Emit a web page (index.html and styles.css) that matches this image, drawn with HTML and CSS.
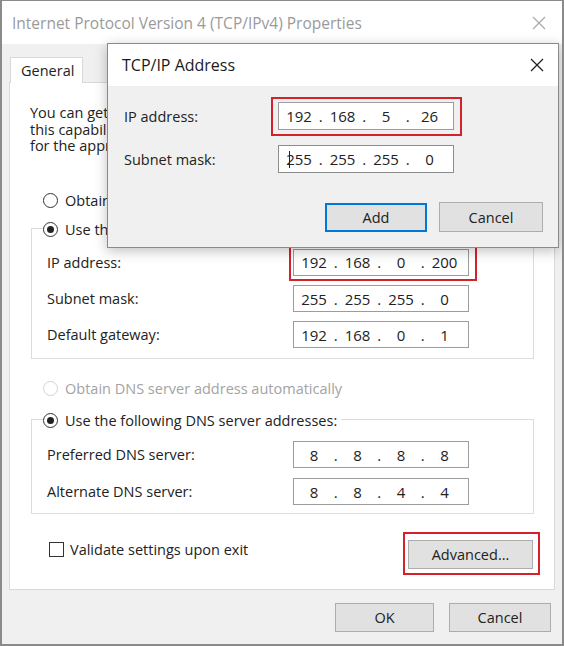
FILE: index.html
```html
<!DOCTYPE html>
<html lang="en">
<head>
  <meta charset="UTF-8">
  <title>Internet Protocol Version 4 (TCP/IPv4) Properties</title>
  <link rel="stylesheet" href="styles.css">
</head>
<body>
  <div class="window">
    <div class="titlebar">
      <span class="title">Internet Protocol Version 4 (TCP/IPv4) Properties</span>
      <svg class="close" width="14" height="14" viewBox="0 0 14 14"><path d="M1 1L13 13M13 1L1 13" stroke="currentColor" stroke-width="1.2" fill="none"/></svg>
    </div>
    <div class="win-body">
      <div class="tabs"><div class="tab">General</div></div>
      <div class="panel">
        <p class="intro">You can get IP settings assigned automatically if your network supports<br>this capability. Otherwise, you need to ask your network administrator<br>for the appropriate IP settings.</p>

        <div class="option first"><span class="radio"></span>Obtain an IP address automatically</div>

        <div class="group ip-group">
          <div class="group-title"><span class="radio on"></span>Use the following IP address:</div>
          <div class="row">
            <span>IP address:</span>
            <span class="mark">
              <span class="ip"><span>192</span><i>.</i><span>168</span><i>.</i><span>0</span><i>.</i><span>200</span></span>
            </span>
          </div>
          <div class="row">
            <span>Subnet mask:</span>
            <span class="ip"><span>255</span><i>.</i><span>255</span><i>.</i><span>255</span><i>.</i><span>0</span></span>
          </div>
          <div class="row">
            <span>Default gateway:</span>
            <span class="ip"><span>192</span><i>.</i><span>168</span><i>.</i><span>0</span><i>.</i><span>1</span></span>
          </div>
        </div>

        <div class="option dns disabled"><span class="radio"></span>Obtain DNS server address automatically</div>

        <div class="group dns-group">
          <div class="group-title"><span class="radio on"></span>Use the following DNS server addresses:</div>
          <div class="row">
            <span>Preferred DNS server:</span>
            <span class="ip"><span>8</span><i>.</i><span>8</span><i>.</i><span>8</span><i>.</i><span>8</span></span>
          </div>
          <div class="row">
            <span>Alternate DNS server:</span>
            <span class="ip"><span>8</span><i>.</i><span>8</span><i>.</i><span>4</span><i>.</i><span>4</span></span>
          </div>
        </div>

        <div class="panel-foot">
          <div class="check"><span class="box"></span>Validate settings upon exit</div>
          <span class="mark adv-mark"><button class="btn adv">Advanced...</button></span>
        </div>
      </div>
      <div class="buttons">
        <button class="btn ok">OK</button>
        <button class="btn cancel">Cancel</button>
      </div>
    </div>

    <!-- child dialog on top of the properties window -->
    <div class="dialog">
      <div class="titlebar active">
        <span class="title">TCP/IP Address</span>
        <svg class="close" width="14" height="14" viewBox="0 0 14 14"><path d="M1 1L13 13M13 1L1 13" stroke="currentColor" stroke-width="1.3" fill="none"/></svg>
      </div>
      <div class="dlg-body">
        <div class="dlg-row">
          <span>IP address:</span>
          <span class="mark dlg-mark">
            <span class="ip"><span>192</span><i>.</i><span>168</span><i>.</i><span>5</span><i>.</i><span>26</span></span>
          </span>
        </div>
        <div class="dlg-row">
          <span>Subnet mask:</span>
          <span class="ip sub"><b class="caret"></b><span>255</span><i>.</i><span>255</span><i>.</i><span>255</span><i>.</i><span>0</span></span>
        </div>
        <div class="dlg-buttons">
          <button class="btn add">Add</button>
          <button class="btn dcancel">Cancel</button>
        </div>
      </div>
    </div>
  </div>
</body>
</html>
```

FILE: styles.css
```css
* { box-sizing: border-box; }
body { margin: 0; font-family: "Open Sans", "Noto Sans", sans-serif; font-size: 14.5px; color: #222; background: #f0f0f0; }
.window { position: relative; width: 564px; height: 646px; border: 2px solid #8a8a8a; border-top-width: 1px; background: #f0f0f0; overflow: hidden; }

.titlebar { height: 43px; background: #fff; display: flex; align-items: center; justify-content: space-between; padding: 0 16px 0 10px; }
.titlebar .title { font-size: 15.5px; color: #9a9a9a; }
.titlebar .close { color: #a8a8a8; }
.titlebar.active .title { color: #1a1a1a; }
.titlebar.active .close { color: #222; }

.win-body { padding: 13px 7px 0 7px; }
.tabs { height: 25px; display: flex; padding-left: 1px; }
.tab { width: 73px; height: 26px; background: #fff; border: 1px solid #d9d9d9; border-bottom: none; padding: 3px 0 0 10px; position: relative; z-index: 1; }
.panel { height: 508px; background: #fff; border: 1px solid #d9d9d9; padding: 0 0 0 20px; overflow: hidden; }

.intro { margin: 22px 0 0; line-height: 16.5px; white-space: nowrap; }

.option { display: flex; align-items: center; height: 18px; margin-left: 13px; }
.option.first { margin-top: 37px; }
.option.dns { margin-top: 20px; }
.option.disabled { color: #a3a3a3; }
.option.disabled .radio { border-color: #d4d4d4; }

.radio { width: 15px; height: 15px; border: 1px solid #333; border-radius: 50%; margin-right: 7px; display: flex; align-items: center; justify-content: center; flex: none; }
.radio.on::after { content: ""; width: 7px; height: 7px; border-radius: 50%; background: #222; }

.group { width: 503px; margin-left: 1px; border: 1px solid #dcdcdc; padding: 0 0 9px 15px; display: flex; flex-direction: column; gap: 9px; }
.ip-group { margin-top: 18.5px; padding-bottom: 10px; }
.dns-group { margin-top: 22px; padding-bottom: 8px; gap: 10px; }
.group-title { display: flex; align-items: center; height: 18px; margin: -9px 0 2px -4px; padding-right: 4px; width: fit-content; background: #fff; }

.row { display: flex; align-items: center; height: 27px; }
.row > span:first-child { width: 246px; }

.ip { display: flex; align-items: center; width: 176px; height: 27px; border: 1px solid #9c9c9c; background: #fff; padding-left: 1.5px; font-size: 15px; position: relative; }
.ip span { width: 37px; text-align: center; }
.ip i { width: 6.5px; text-align: center; font-style: normal; }

.mark { display: inline-flex; border: 2px solid #d3222c; }
.row .mark { margin: -4px 0 -4px -4px; padding: 2px 6px 3px 2px; }

.panel-foot { display: flex; justify-content: space-between; align-items: flex-start; margin-top: 18px; padding-right: 14px; }
.check { display: flex; align-items: center; height: 16px; margin: 9px 0 0 19px; }
.check .box { width: 15px; height: 15px; border: 1px solid #333; margin-right: 6px; }

.btn { font: inherit; color: #222; background: #e1e1e1; border: 1px solid #adadad; height: 29px; padding: 0; }
.adv-mark { padding: 6px 5px 4px 3px; }
.adv { width: 125px; }

.buttons { display: flex; justify-content: flex-end; gap: 15px; margin-top: 13px; padding-right: 4px; }
.ok { width: 99px; }
.cancel { width: 102px; }

.dialog { position: absolute; left: 105px; top: 42px; width: 452px; height: 205px; border: 1px solid #8a8a8a; background: #f0f0f0; box-shadow: 0 3px 12px rgba(0, 0, 0, 0.25); }
.dialog .titlebar { height: 42px; padding: 0 14px 0 14px; }
.dialog .titlebar .title { font-size: 16px; }
.dlg-body { padding: 11px 15px 0 16px; }
.dlg-row { display: flex; align-items: center; }
.dlg-row > span:first-child { width: 147px; }
.dlg-mark { padding: 3px 6px 4px 5px; }
.dlg-mark .ip { height: 28px; }
.dlg-row + .dlg-row { margin-top: 9px; }
.ip.sub { margin-left: 7px; height: 28px; border-color: #8c8c8c; }
.caret { position: absolute; left: 10px; top: 5px; width: 1px; height: 17px; background: #222; }
.dlg-buttons { display: flex; justify-content: flex-end; align-items: center; gap: 12px; margin-top: 29px; }
.add { width: 102px; height: 29px; border: 2px solid #0078d7; }
.dcancel { width: 104px; height: 30px; }
```
